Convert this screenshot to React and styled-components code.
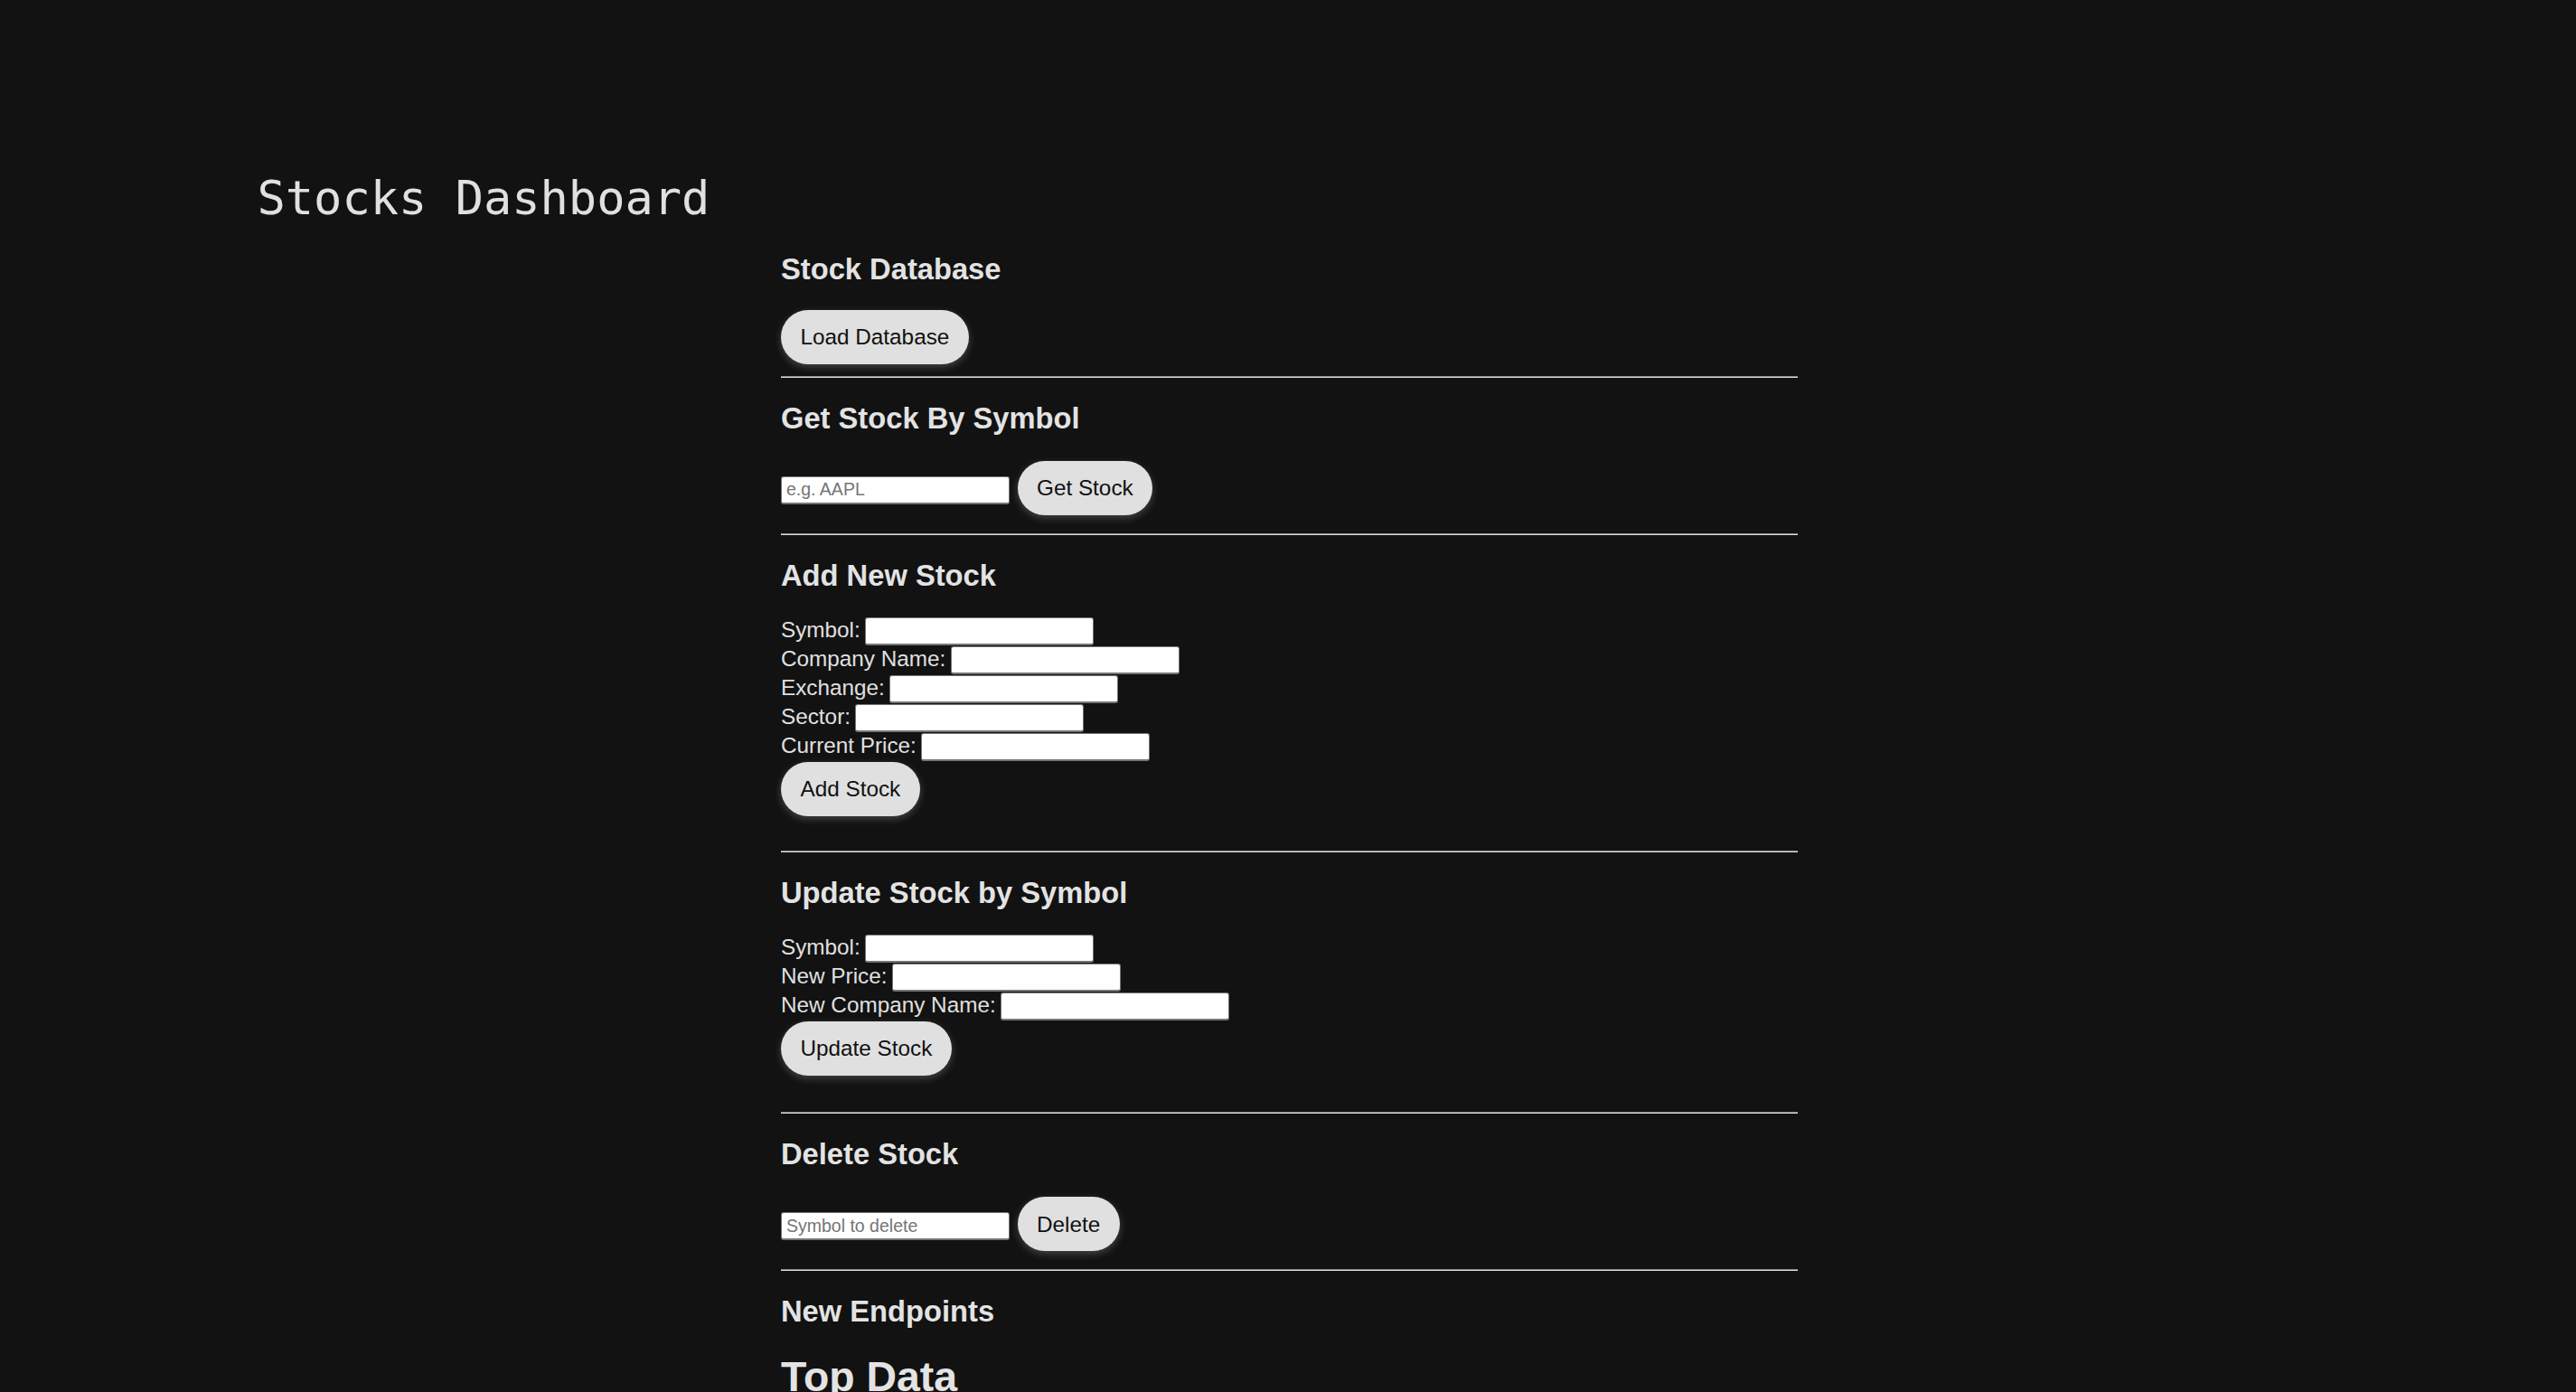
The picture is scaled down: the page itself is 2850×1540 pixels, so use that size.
import React, { useState } from 'react';
import styled, { createGlobalStyle } from 'styled-components';

const GlobalStyle = createGlobalStyle`
  html, body {
    margin: 0;
    padding: 0;
    background: #121212;
  }
  body {
    color: #e0e0e0;
    font-family: "Liberation Sans", Arial, sans-serif;
    font-size: 24.3px;
  }
`;

const Page = styled.div`
  min-height: 100vh;
  padding-top: 189px;
  padding-bottom: 80px;
  box-sizing: border-box;
`;

const Title = styled.h1`
  margin: 0 0 3px 284.5px;
  font-family: "DejaVu Sans Mono", "Liberation Mono", monospace;
  font-size: 52px;
  line-height: 60px;
  font-weight: normal;
  color: #e0e0e0;
`;

const Main = styled.main`
  margin-left: 864px;
  width: 1125px;
`;

const Section = styled.section`
  display: flex;
  flex-direction: column;
  align-items: flex-start;
`;

const Heading = styled.h2`
  margin: 26.5px 0 27px;
  font-size: 32.7px;
  line-height: 37.6px;
  font-weight: bold;
  color: #e3e3e3;
`;

const BigHeading = styled.h1`
  margin: 0;
  font-size: 46.4px;
  line-height: 53px;
  font-weight: bold;
  color: #e3e3e3;
`;

const Divider = styled.hr`
  align-self: stretch;
  margin: 12.5px 0 0;
  height: 0;
  border: none;
  border-top: 1px solid #8c8c8c;
  border-bottom: 1px solid #dcdcdc;
`;

const Button = styled.button`
  height: 60px;
  padding: 0 21.5px;
  border: none;
  border-radius: 30px;
  background: #e0e0e0;
  color: #111;
  font-family: inherit;
  font-size: 24.3px;
  line-height: 27.9px;
  box-shadow: 0 3px 9px rgba(255, 255, 255, 0.22);
  cursor: pointer;
`;

const InlineRow = styled.div`
  display: flex;
  align-items: baseline;
  gap: 8.5px;
  padding: 1.5px 0 7px;
`;

const Input = styled.input`
  box-sizing: border-box;
  width: 253px;
  height: 31px;
  padding: 0 5px;
  border: 1px solid #767676;
  border-bottom-width: 2px;
  border-radius: 3px;
  background: #fff;
  color: #111;
  font-family: "Liberation Sans", Arial, sans-serif;
  font-size: 19.5px;
  outline: none;

  &::placeholder {
    color: #757575;
  }
`;

const Form = styled.form`
  display: flex;
  flex-direction: column;
  align-items: flex-start;
  padding-bottom: ${(p) => p.$tail || 25.5}px;
`;

const FieldRow = styled.label`
  display: flex;
  align-items: baseline;
  gap: 5.5px;
  height: 32px;
  line-height: 27.9px;
`;

function Field({ label, value, onChange }) {
  return (
    <FieldRow>
      {label}
      <Input value={value} onChange={(e) => onChange(e.target.value)} />
    </FieldRow>
  );
}

export default function App() {
  const [lookup, setLookup] = useState('');
  const [del, setDel] = useState('');
  const [add, setAdd] = useState({ symbol: '', name: '', exchange: '', sector: '', price: '' });
  const [upd, setUpd] = useState({ symbol: '', price: '', name: '' });

  const stop = (e) => e.preventDefault();

  return (
    <Page>
      <GlobalStyle />
      <Title>Stocks Dashboard</Title>
      <Main>
        <Section>
          <Heading>Stock Database</Heading>
          <Button>Load Database</Button>
          <Divider />
        </Section>

        <Section>
          <Heading>Get Stock By Symbol</Heading>
          <InlineRow>
            <Input placeholder="e.g. AAPL" value={lookup} onChange={(e) => setLookup(e.target.value)} />
            <Button>Get Stock</Button>
          </InlineRow>
          <Divider />
        </Section>

        <Section>
          <Heading>Add New Stock</Heading>
          <Form onSubmit={stop}>
            <Field label="Symbol:" value={add.symbol} onChange={(v) => setAdd({ ...add, symbol: v })} />
            <Field label="Company Name:" value={add.name} onChange={(v) => setAdd({ ...add, name: v })} />
            <Field label="Exchange:" value={add.exchange} onChange={(v) => setAdd({ ...add, exchange: v })} />
            <Field label="Sector:" value={add.sector} onChange={(v) => setAdd({ ...add, sector: v })} />
            <Field label="Current Price:" value={add.price} onChange={(v) => setAdd({ ...add, price: v })} />
            <Button type="submit">Add Stock</Button>
          </Form>
          <Divider />
        </Section>

        <Section>
          <Heading>Update Stock by Symbol</Heading>
          <Form onSubmit={stop} $tail={27.5}>
            <Field label="Symbol:" value={upd.symbol} onChange={(v) => setUpd({ ...upd, symbol: v })} />
            <Field label="New Price:" value={upd.price} onChange={(v) => setUpd({ ...upd, price: v })} />
            <Field label="New Company Name:" value={upd.name} onChange={(v) => setUpd({ ...upd, name: v })} />
            <Button type="submit">Update Stock</Button>
          </Form>
          <Divider />
        </Section>

        <Section>
          <Heading>Delete Stock</Heading>
          <InlineRow>
            <Input placeholder="Symbol to delete" value={del} onChange={(e) => setDel(e.target.value)} />
            <Button>Delete</Button>
          </InlineRow>
          <Divider />
        </Section>

        <Section>
          <Heading>New Endpoints</Heading>
          <BigHeading>Top Data</BigHeading>
        </Section>
      </Main>
    </Page>
  );
}
